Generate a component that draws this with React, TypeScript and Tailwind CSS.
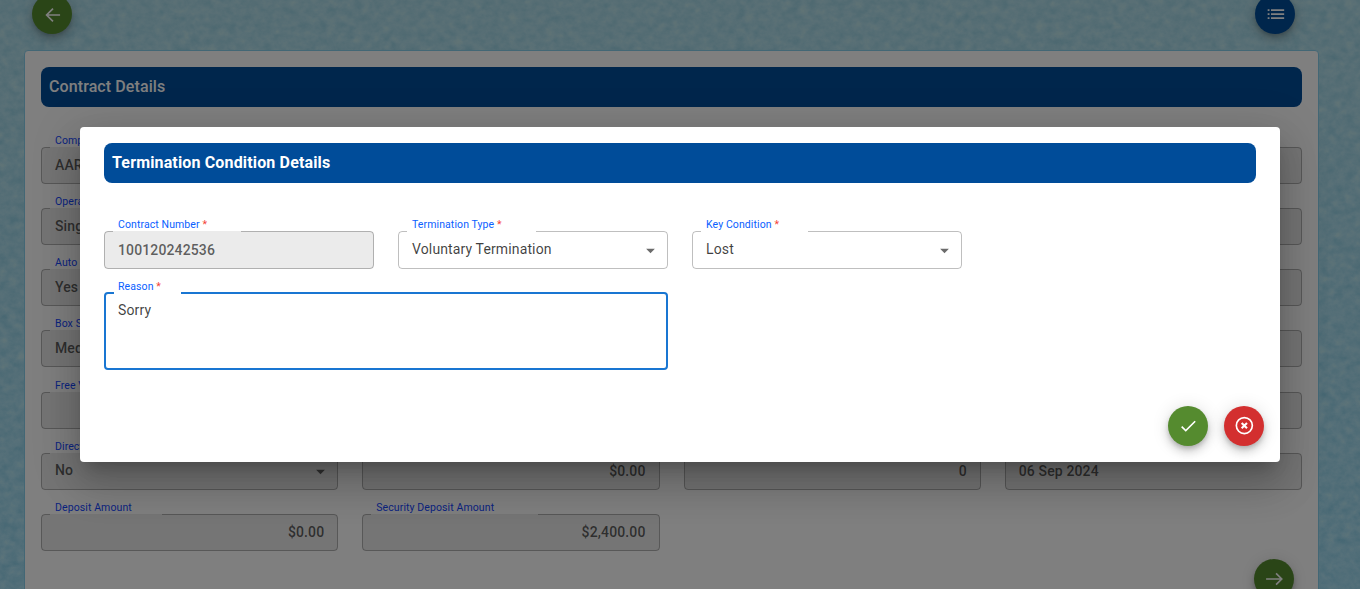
import type { ReactNode } from "react";

const ROBOTO = "font-['Roboto',sans-serif]";
const FAB_SHADOW =
  "shadow-[0px_3px_5px_-1px_rgba(0,0,0,0.2),0px_6px_10px_0px_rgba(0,0,0,0.14),0px_1px_18px_0px_rgba(0,0,0,0.12)]";

type FieldProps = {
  label: string;
  value: string;
  notch: string;
  required?: boolean;
  disabled?: boolean;
  select?: boolean;
  right?: boolean;
  focused?: boolean;
  size?: string;
};

function Field({ label, value, notch, required, disabled, select, right, focused, size = "h-[37px]" }: FieldProps) {
  return (
    <div
      className={`relative flex rounded-[4px] px-[14px] ${size} ${disabled ? "bg-[#ebebeb] font-medium text-black/62" : "text-black/75"} ${
        focused ? "items-start pt-2" : "items-center"
      } ${right ? "justify-end" : "justify-between"}`}
    >
      <span className={`text-[14px] leading-[21px] tracking-[0.13px] whitespace-nowrap ${select ? "-mt-px" : ""}`}>{value}</span>
      {select && (
        <svg className="-mr-[7px] h-[21px] w-[21px] shrink-0 fill-black/58" viewBox="0 0 24 24">
          <path d="M7 10l5 5 5-5z" />
        </svg>
      )}
      <fieldset
        className={`pointer-events-none absolute inset-x-0 -top-[5px] bottom-0 rounded-[4px] pl-[8px] ${
          focused ? "border-2 border-[#1976d2]" : "border border-black/25"
        }`}
      >
        <legend className={`h-[11px] ${notch}`} />
      </fieldset>
      <span
        className={`absolute left-[14px] text-[10.5px] leading-[14px] tracking-[0.1px] whitespace-nowrap font-normal ${
          focused ? "-top-[12px]" : "-top-[13px]"
        } ${required ? "text-[#0a60ff]" : "text-[#1648ff]"}`}
      >
        {label}
        {required && <span className="text-[#f44336]"> *</span>}
      </span>
    </div>
  );
}

function Fab({ color, children }: { color: string; children: ReactNode }) {
  return (
    <button className={`flex h-10 w-10 shrink-0 items-center justify-center rounded-full text-white ${color} ${FAB_SHADOW}`}>
      {children}
    </button>
  );
}

function Texture() {
  return (
    <svg className="absolute inset-0 h-full w-full">
      <defs>
        <filter id="paper" x="0" y="0" width="100%" height="100%" colorInterpolationFilters="sRGB">
          <feTurbulence type="fractalNoise" baseFrequency="0.11 0.13" numOctaves="5" seed="21" />
          <feColorMatrix values="0.3 0.22 0 0 0.41  0.17 0.13 0 0 0.77  0.12 0.09 0 0 0.88  0 0 0 0 1" />
        </filter>
        <linearGradient id="tint" x1="0" y1="0" x2="0" y2="1">
          <stop offset="0" stopColor="#b0cdd6" stopOpacity="0.5" />
          <stop offset="1" stopColor="#98c8e4" stopOpacity="0.4" />
        </linearGradient>
      </defs>
      <rect width="100%" height="100%" filter="url(#paper)" />
      <rect width="100%" height="100%" fill="url(#tint)" />
    </svg>
  );
}

const covered: FieldProps = { label: "", value: "", notch: "w-0", disabled: true };

const fields: FieldProps[] = [
  { label: "Company", value: "AARNA", notch: "w-[80px]", disabled: true },
  covered,
  covered,
  covered,
  { label: "Operation Type", value: "Single", notch: "w-[110px]", disabled: true },
  covered,
  covered,
  covered,
  { label: "Auto Renewal", value: "Yes", notch: "w-[110px]", disabled: true },
  covered,
  covered,
  covered,
  { label: "Box Size", value: "Medium", notch: "w-[80px]", disabled: true },
  covered,
  covered,
  covered,
  { label: "Free Visits", value: "", notch: "w-[80px]", disabled: true },
  covered,
  covered,
  covered,
  { label: "Direct Debit", value: "No", notch: "w-[90px]", disabled: true, select: true },
  { label: "", value: "$0.00", notch: "w-0", disabled: true, right: true },
  { label: "", value: "0", notch: "w-0", disabled: true, right: true },
  { label: "", value: "06 Sep 2024", notch: "w-0", disabled: true },
  { label: "Deposit Amount", value: "$0.00", notch: "w-[112px]", disabled: true, right: true },
  { label: "Security Deposit Amount", value: "$2,400.00", notch: "w-[167px]", disabled: true, right: true },
];

export default function App() {
  return (
    <div className={`relative h-[589px] w-full overflow-hidden bg-[#b4dcec] ${ROBOTO}`}>
      <Texture />
      <div className="relative flex h-[640px] flex-col pl-6 pr-[41px]">
        <div className="-mt-[6px] flex justify-between pl-2 pr-6">
          <Fab color="bg-[#558b2f]">
            <svg className="mt-px ml-px h-5 w-5 fill-none stroke-current stroke-2" viewBox="0 0 24 24">
              <path d="M20.5 12H4M12 4.3L4.3 12l7.7 7.7" />
            </svg>
          </Fab>
          <Fab color="bg-[#004c99]">
            <svg className="ml-px h-5 w-5 fill-current" viewBox="0 0 24 24">
              <path d="M2 6.4h2.2v2H2zM2 11.2h2.2v2H2zM2 16h2.2v2H2zM6 6.4h15.8v2H6zM6 11.2h15.8v2H6zM6 16h15.8v2H6z" />
            </svg>
          </Fab>
        </div>
        <div className="mt-4 flex grow flex-col rounded-[4px] border border-[#87ceeb] bg-white p-4">
          <div className="flex h-10 shrink-0 items-center rounded-lg bg-[#004c99] px-2 text-[16px] font-medium tracking-[0.1px] text-white">
            Contract Details
          </div>
          <div className="mt-[39.9px] grid grid-cols-4 gap-x-6 gap-y-[24.19px]">
            {fields.map((f, i) => (
              <Field key={i} {...f} />
            ))}
          </div>
          <div className="mt-[8px] flex justify-end pr-2">
            <Fab color="bg-[#558b2f]">
              <svg className="h-5 w-5 fill-none stroke-current stroke-2" viewBox="0 0 24 24">
                <path d="M2.5 12H21M14.5 5.2l6.8 6.8-6.8 6.8" />
              </svg>
            </Fab>
          </div>
        </div>
      </div>

      <div className="absolute inset-0 flex justify-center bg-black/50 pt-[127px]">
        <div className="flex h-[335px] w-[1200px] flex-col rounded-[4px] bg-white px-6 pt-4 shadow-[0px_11px_15px_-7px_rgba(0,0,0,0.2),0px_24px_38px_3px_rgba(0,0,0,0.14),0px_9px_46px_8px_rgba(0,0,0,0.12)]">
          <div className="flex h-10 shrink-0 items-center rounded-lg bg-[#004c99] px-2 text-[16px] font-bold tracking-[0.15px] text-white">
            Termination Condition Details
          </div>
          <div className="mt-12 grid grid-cols-4 gap-x-6 gap-y-[23px]">
            <Field label="Contract Number" value="100120242536" notch="w-[128px]" required disabled size="h-[38px]" />
            <Field label="Termination Type" value="Voluntary Termination" notch="w-[129px]" required select size="h-[38px]" />
            <Field label="Key Condition" value="Lost" notch="w-[107px]" required select size="h-[38px]" />
            <div className="col-span-2 col-start-1">
              <Field label="Reason" value="Sorry" notch="w-[67px]" required focused size="h-[78px]" />
            </div>
          </div>
          <div className="mt-9 -mr-2 flex justify-end gap-4">
            <Fab color="bg-[#558b2f]">
              <svg className="h-5 w-5 fill-current" viewBox="0 0 24 24">
                <path d="M9.3 16.17L5.13 12l-1.42 1.41L9.3 19l12-12-1.41-1.41z" />
              </svg>
            </Fab>
            <Fab color="bg-[#d32f2f]">
              <svg className="h-5 w-5 fill-none stroke-current stroke-2" viewBox="0 0 24 24">
                <circle cx="12.4" cy="11.5" r="9.6" />
                <path className="stroke-[2.5]" d="M9.2 8.3l6.4 6.4M15.6 8.3l-6.4 6.4" />
              </svg>
            </Fab>
          </div>
        </div>
      </div>
    </div>
  );
}
